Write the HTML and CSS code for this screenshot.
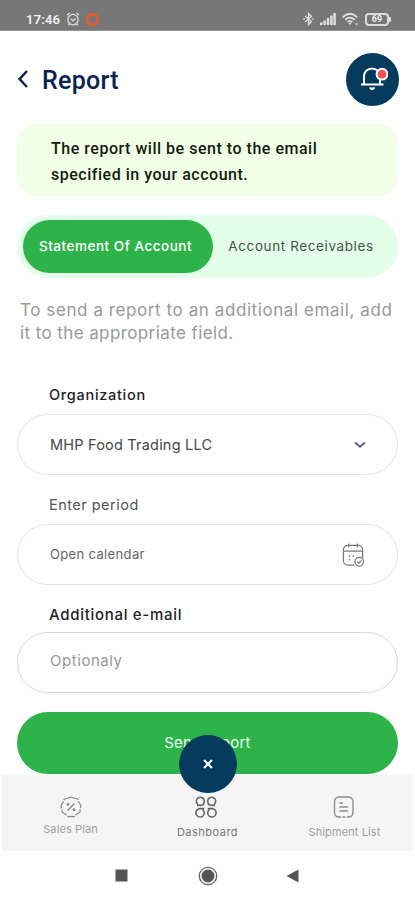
FILE: index.html
```html
<!DOCTYPE html>
<html lang="en">
<head>
<meta charset="utf-8">
<meta name="viewport" content="width=device-width, initial-scale=1">
<title>Report</title>
<link rel="stylesheet" href="styles.css">
</head>
<body>
<div class="screen">
  <div class="status">
    <span class="time">17:46</span>
    <svg class="alarm" width="14" height="14" viewBox="0 0 14 14" fill="none" stroke="#ddd" stroke-width="1.3"><circle cx="7" cy="7.6" r="5.2"/><path d="M1 3.2 3.6 1M13 3.2 10.4 1M4.8 6.6 7 8.8 9.6 6.6M3.4 12 2.4 13.4M10.6 12l1 1.4"/></svg>
    <svg class="rec" width="15" height="15" viewBox="0 0 15 15" fill="none" stroke="#ee5a30" stroke-width="2.8"><circle cx="7.5" cy="7.5" r="5.4"/></svg>
    <div class="sys">
      <svg width="11" height="14" viewBox="0 0 11 14" fill="none" stroke="#e2e2e2" stroke-width="1.3"><path d="M2 4l6.5 5.5L5.5 12.500V1.500L8.500 4.500 2 10"/><path d="M.2 7h1.600M9.200 7h1.600"/></svg>
      <svg width="16" height="12" viewBox="0 0 16 12" fill="#e2e2e2"><path d="M0 9.500h2.400V12H0zM3.400 7.500h2.400V12H3.400zM6.800 5h2.400v7H6.800zM10.200 2.500h2.400V12h-2.400zM13.400 0h2.400v12h-2.400z"/></svg>
      <svg width="17" height="13" viewBox="0 0 17 13" fill="none" stroke="#e2e2e2" stroke-width="1.800"><path d="M.8 4.300C5-.4 11-.4 15.200 4.300M3.300 6.800c2.800-2.800 6.600-2.800 9.400 0M5.700 9.200c1.500-1.400 3.100-1.400 4.600 0"/><path d="M6.500 10h3L8 12z" fill="#e2e2e2" stroke="none"/><circle cx="14.500" cy="11" r="1.300" fill="#bbb" stroke="none"/></svg>
      <div class="battery">69</div>
    </div>
  </div>

  <header class="header">
    <svg class="back" width="12" height="20" viewBox="0 0 12 20" fill="none" stroke="#0a2350" stroke-width="2.500"><path d="M10 2 2.600 10 10 18"/></svg>
    <h1>Report</h1>
    <div class="bell">
      <svg width="28" height="26" viewBox="0 0 28 26" fill="none" stroke="#fff" stroke-width="2"><path d="M1 18.500h22.500M4 18.500V10a8 7.600 0 0 1 16 0v8.500"/><path d="M10.500 21.200a1.700 1.700 0 0 0 3.400 0" stroke-width="2.200"/><circle cx="22" cy="8.200" r="5.400" fill="#f24f53"/></svg>
    </div>
  </header>

  <main class="content">
    <div class="notice">The report will be sent to the email<br>specified in your account.</div>
    <div class="tabs">
      <div class="tab active"><span>Statement Of Account</span></div>
      <div class="tab"><span>Account Receivables</span></div>
    </div>
    <p class="hint"><span class="wide">To send a report to an additional email, add</span><br>it to the appropriate field.</p>

    <label class="label strong org">Organization</label>
    <div class="field">
      <span class="value">MHP Food Trading LLC</span>
      <svg class="chev" width="12" height="8" viewBox="0 0 12 8" fill="none" stroke="#605d86" stroke-width="2"><path d="M1.200 1.500 6 5.700l4.800-4.200"/></svg>
    </div>
    <label class="label period">Enter period</label>
    <div class="field">
      <span class="value small">Open calendar</span>
      <svg class="cal" width="23" height="24" viewBox="0 0 24 25" fill="none" stroke="#777" stroke-width="1.300"><path d="M13 23H6a4.500 4.500 0 0 1-4.500-4.500V7A4.500 4.500 0 0 1 6 2.500h11A4.500 4.500 0 0 1 21.500 7v8.500M1.500 8.500h20M7 .5v4M16 .5v4"/><circle cx="18" cy="19.500" r="4.500"/><path d="M16 19.500l1.500 1.500 2.800-2.800"/><path d="M7 13.500h1.500M11 13.500h1.500M7 17.500h1.500" stroke-width="1.600"/></svg>
    </div>
    <label class="label strong mail">Additional e-mail</label>
    <div class="field last"><span class="value placeholder">Optionaly</span></div>
    <div class="send">Send report</div>
  </main>

  <nav class="nav">
    <div class="fab"><svg width="12" height="12" viewBox="0 0 12 12" fill="none" stroke="#fff" stroke-width="2"><path d="M2 2l8 8M10 2l-8 8"/></svg></div>
    <div class="item plan">
      <svg width="22" height="22" viewBox="0 0 22 22" fill="none" stroke="#858585" stroke-width="1.200"><path d="M11 1 14 2 17.600 3 19 6.500 21 9.500 20.200 12.500 19.900 16.300 16.800 18 14.200 20.700 11 20.300 7.800 20.700 5.200 18 2.100 16.300 1.800 12.500 1 9.500 3 6.500 4.400 3 8 2z" stroke-linejoin="round" stroke-dasharray="8 1.200"/><path d="M7.500 14.500l7-7"/><circle cx="8" cy="8.500" r=".8"/><circle cx="14" cy="13.700" r=".8"/></svg>
      <span>Sales Plan</span>
    </div>
    <div class="item dash">
      <svg width="24" height="24" viewBox="0 0 24 24" fill="none" stroke="#666" stroke-width="1.600"><path d="M4 9.500A4 4 0 1 1 10.300 6C10.300 8.500 9 10.400 6.500 10.400H3M20 9.500A4 4 0 1 0 13.700 6c0 2.500 1.300 4.400 3.800 4.400H21M10.300 13.600H6A4.200 4.200 0 1 0 10.300 18c0-1.500-.6-2.600-1.800-3.200M13.700 13.600H18A4.200 4.200 0 1 1 13.700 18c0-1.500.6-2.600 1.800-3.200"/></svg>
      <span>Dashboard</span>
    </div>
    <div class="item ship">
      <svg width="22" height="24" viewBox="0 0 22 24" fill="none" stroke="#8c8c8c" stroke-width="1.400"><path d="M8 22H6a4.500 4.500 0 0 1-4.500-4.500v-11A4.500 4.500 0 0 1 6 2h9.500A4.500 4.500 0 0 1 20 6.500v11a4.500 4.500 0 0 1-4.500 4.500H14M9.500 22h3M6.500 8H10M6.500 12h8.500M6.500 16h8.500"/></svg>
      <span>Shipment List</span>
    </div>
  </nav>

  <div class="system-nav">
    <svg width="13" height="13" viewBox="0 0 13 13"><path d="M.5.500h12v12H.5z" fill="#555"/></svg>
    <svg width="20" height="20" viewBox="0 0 20 20"><circle cx="10" cy="10" r="8.700" fill="none" stroke="#666" stroke-width="1.300"/><circle cx="10" cy="10" r="6.500" fill="#555"/></svg>
    <svg class="tri" width="13" height="14" viewBox="0 0 13 14"><path d="M12.500.5v13L.5 7z" fill="#555"/></svg>
  </div>
</div>
</body>
</html>
```
FILE: styles.css
```css
* { box-sizing: border-box; }
body { margin: 0; background: #fff; }
.screen { width: 415px; height: 900px; display: flex; flex-direction: column; overflow: hidden; background: #fefefe; font-family: Inter, sans-serif; color: #333; }
svg { display: block; flex: none; }

.status { height: 31px; flex: none; background: #777; border-bottom: 1px solid #929292; display: flex; align-items: center; padding: 8px 26px 0 26px; }
.time { font: 600 13px Roboto, sans-serif; color: #f4f4f4; letter-spacing: .2px; width: 40px; }
.rec { margin-left: 5px; }
.sys { margin-left: auto; display: flex; align-items: center; gap: 6px; }
.battery { position: relative; width: 24px; height: 13px; border: 2px solid #dcdcdc; border-radius: 4px; font: 700 9px/9px Roboto, sans-serif; color: #eee; text-align: center; }
.battery::after { content: ""; position: absolute; right: -4px; top: 2px; width: 2px; height: 5px; background: #e2e2e2; border-radius: 1px; }

.header { height: 93px; flex: none; display: flex; align-items: center; padding: 3px 16px 0 17px; }
.header h1 { margin: 2px 0 0 13px; font: 500 25px Roboto, sans-serif; color: #0a2350; letter-spacing: .3px; }
.bell { margin-left: auto; width: 53px; height: 53px; border-radius: 50%; background: #043a5c; display: flex; align-items: center; justify-content: center; padding-left: 3px; }

.content { height: 651px; flex: none; padding: 0 17px; display: flex; flex-direction: column; }
.notice { height: 72px; border-radius: 20px; background: #f0ffe5; padding: 12px 34px; font: 500 16px/25.500px Roboto, sans-serif; letter-spacing: .52px; color: #151a12; white-space: nowrap; }
.tabs { margin-top: 19px; height: 63px; border-radius: 32px; background: #e3ffe9; padding: 5px 6px; display: flex; }
.tab { flex: 1; display: flex; align-items: center; justify-content: center; font-size: 13.500px; letter-spacing: .6px; color: #46524a; white-space: nowrap; padding: 0 3px 2px 0; }
.tab.active { flex: none; width: 190px; border-radius: 27px; background: #2eb34b; color: #fff; font-weight: 500; padding: 0 5px 2px 0; letter-spacing: .52px; }
.hint { margin: 21px 3px 0; font-size: 17px; line-height: 23px; color: #999; white-space: nowrap; letter-spacing: .4px; }
.wide { letter-spacing: .58px; }
.label { display: block; margin-left: 32px; font-size: 14.500px; line-height: 20px; color: #555; letter-spacing: .48px; }
.strong { color: #222; font-weight: 500; letter-spacing: .7px; }
.org { margin-top: 40px; }
.period, .mail { margin-top: 20px; }
.mail { font-size: 15px; }
.field { margin-top: 9px; height: 61px; flex: none; border: 1px solid #e4e4e4; border-radius: 31px; padding: 0 32px; display: flex; align-items: center; justify-content: space-between; }
.field.last { margin-top: 7px; border-color: #d8d8d8; }
.value { font-size: 14.500px; color: #484848; letter-spacing: .2px; }
.small { font-size: 13px; color: #666; letter-spacing: .35px; padding-bottom: 2px; }
.placeholder { font-size: 15px; color: #999; padding-bottom: 4px; letter-spacing: .55px; }
.chev { margin-right: -1px; }
.send { margin-top: 19px; height: 62px; flex: none; border-radius: 31px; background: #2eb34b; color: #e9ffec; font-size: 15px; letter-spacing: .25px; display: flex; align-items: center; justify-content: center; padding-bottom: 1px; }

.nav { position: relative; height: 76px; flex: none; margin: 0 2px; background: #f5f5f5; display: grid; grid-template-columns: repeat(3, 137px); }
.item { display: flex; flex-direction: column; align-items: center; font-size: 11px; line-height: 14px; color: #a0a0a0; padding-top: 21px; letter-spacing: .1px; }
.item span { margin-top: 4px; }
.dash { color: #777; letter-spacing: .5px; padding: 20px 3px 0 0; }
.ship { padding: 20px 2px 0 0; }
.dash span, .ship span { margin-top: 6px; }
.dash span { margin-left: 3px; }
.ship span { margin-left: 2px; }
.fab { position: absolute; left: 177px; top: -40px; width: 58px; height: 58px; border-radius: 50%; background: #043a5c; display: flex; align-items: center; justify-content: center; }

.system-nav { flex: 1; display: flex; align-items: center; justify-content: center; gap: 70px; }
.tri { margin-left: -2px; margin-right: 2px; }
```
